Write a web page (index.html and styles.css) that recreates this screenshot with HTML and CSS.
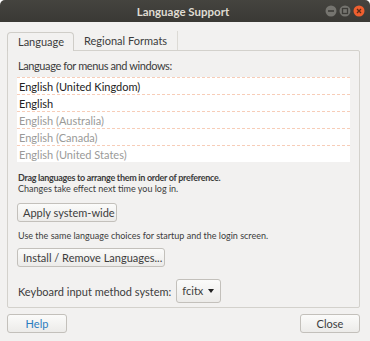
FILE: index.html
```html
<!DOCTYPE html>
<html lang="en">
<head>
  <meta charset="UTF-8">
  <title>Language Support</title>
  <link rel="stylesheet" href="styles.css">
</head>
<body>
  <div class="window">
    <div class="titlebar">
      <span class="title">Language Support</span>
      <div class="wm-buttons">
        <svg class="wm" width="12" height="12" viewBox="0 0 12 12"><circle cx="6" cy="6" r="5.5" fill="#75746f"/><rect x="3" y="5.2" width="6" height="1.6" fill="#3d3c38"/></svg>
        <svg class="wm" width="12" height="12" viewBox="0 0 12 12"><circle cx="6" cy="6" r="5.5" fill="#75746f"/><rect x="3.5" y="3.5" width="5" height="5" fill="none" stroke="#3d3c38" stroke-width="1.3"/></svg>
        <svg class="wm" width="12" height="12" viewBox="0 0 12 12"><circle cx="6" cy="6" r="5.5" fill="#ef5f2f"/><path d="M4 4 L8 8 M8 4 L4 8" stroke="#5a2a18" stroke-width="1.3"/></svg>
      </div>
    </div>

    <div class="content">
      <div class="tabs">
        <div class="tab active">Language</div>
        <div class="tab">Regional Formats</div>
      </div>

      <div class="pane">
        <div class="label">Language for menus and windows:</div>
        <ul class="lang-list">
          <li class="on">English (United Kingdom)</li>
          <li class="on">English</li>
          <li>English (Australia)</li>
          <li>English (Canada)</li>
          <li>English (United States)</li>
        </ul>
        <p class="hint"><strong>Drag languages to arrange them in order of preference.</strong><br>Changes take effect next time you log in.</p>
        <div><button class="btn apply">Apply system-wide</button></div>
        <p class="note">Use the same language choices for startup and the login screen.</p>
        <div><button class="btn install">Install / Remove Languages...</button></div>
        <div class="im-row">
          <span>Keyboard input method system:</span>
          <button class="btn combo">fcitx <span class="arrow"></span></button>
        </div>
      </div>

      <div class="actions">
        <button class="btn help">Help</button>
        <button class="btn close">Close</button>
      </div>
    </div>
  </div>
</body>
</html>
```

FILE: styles.css
```css
body {
  margin: 0;
  background: #ffffff;
  font-family: Lato, 'DejaVu Sans', sans-serif;
}
.window {
  width: 370px;
  height: 341px;
  background: #f2f1f0;
  display: flex;
  flex-direction: column;
  border-radius: 5px 5px 0 0;
  overflow: hidden;
}
.titlebar {
  height: 22px;
  flex: none;
  background: linear-gradient(#45443f, #3a3935);
  display: flex;
  align-items: center;
  justify-content: center;
  position: relative;
}
.title {
  color: #dfdbd2;
  font-weight: bold;
  font-size: 11.5px;
  margin-left: -4px;
}
.wm-buttons {
  position: absolute;
  right: 5px;
  top: 5px;
  display: flex;
  gap: 2px;
}
.content {
  flex: 1;
  padding: 9px 10px 0 7px;
  display: flex;
  flex-direction: column;
}
.tabs {
  display: flex;
  height: 19px;
  font-size: 11px;
  color: #3c3c3c;
}
.tab {
  padding: 0 10px;
  line-height: 19px;
  border-right: 1px solid #dcdad5;
  white-space: nowrap;
}
.tab.active {
  border: 1px solid #cfcdc8;
  border-bottom: none;
  border-radius: 4px 4px 0 0;
  background: #f2f1f0;
  line-height: 18px;
  width: 45px;
  position: relative;
  top: 1px;
}
.pane {
  border: 1px solid #d3d1cc;
  border-radius: 0 2px 2px 2px;
  height: 258px;
  box-sizing: border-box;
  padding: 7px 9px 0 9px;
  font-size: 11px;
  color: #3c3c3c;
  flex: none;
}
.label {
  line-height: 16px;
  margin-left: 1px;
  letter-spacing: -0.4px;
}
.lang-list {
  list-style: none;
  margin: 3px 0 0 0;
  padding: 0;
  background: #ffffff;
}
.lang-list li {
  height: 17px;
  line-height: 17px;
  padding-left: 2px;
  border-top: 1px dashed #f7cdb8;
  box-sizing: border-box;
  color: #9a9a98;
}
.lang-list li.on {
  color: #222222;
}
.hint {
  margin: 10px 0 0 1px;
  font-size: 9px;
  line-height: 11px;
  color: #3c3c3c;
}
.hint strong {
  letter-spacing: -0.3px;
}
.note {
  margin: 8px 0 0 1px;
  font-size: 9px;
  line-height: 11px;
}
.btn {
  font-family: inherit;
  font-size: 11px;
  color: #3c3c3c;
  background: linear-gradient(#fbfbfa, #ecebe9);
  border: 1px solid #c3c0bb;
  border-radius: 3px;
  height: 19px;
  padding: 0 5px;
  line-height: 16px;
  white-space: nowrap;
}
.apply {
  margin-top: 9px;
  width: 100px;
}
.install {
  margin-top: 7px;
  width: 148px;
}
.im-row {
  display: flex;
  align-items: center;
  gap: 5px;
  margin-top: 12px;
  margin-left: 1px;
}
.combo {
  height: 24px;
  width: 45px;
  display: flex;
  align-items: center;
  gap: 5px;
  padding-left: 5px;
}
.arrow {
  width: 0;
  height: 0;
  border-left: 3.5px solid transparent;
  border-right: 3.5px solid transparent;
  border-top: 4px solid #222;
}
.actions {
  display: flex;
  justify-content: space-between;
  margin-top: 6px;
}
.actions .btn {
  width: 60px;
}
.help {
  color: #2a7cbf;
}
```
